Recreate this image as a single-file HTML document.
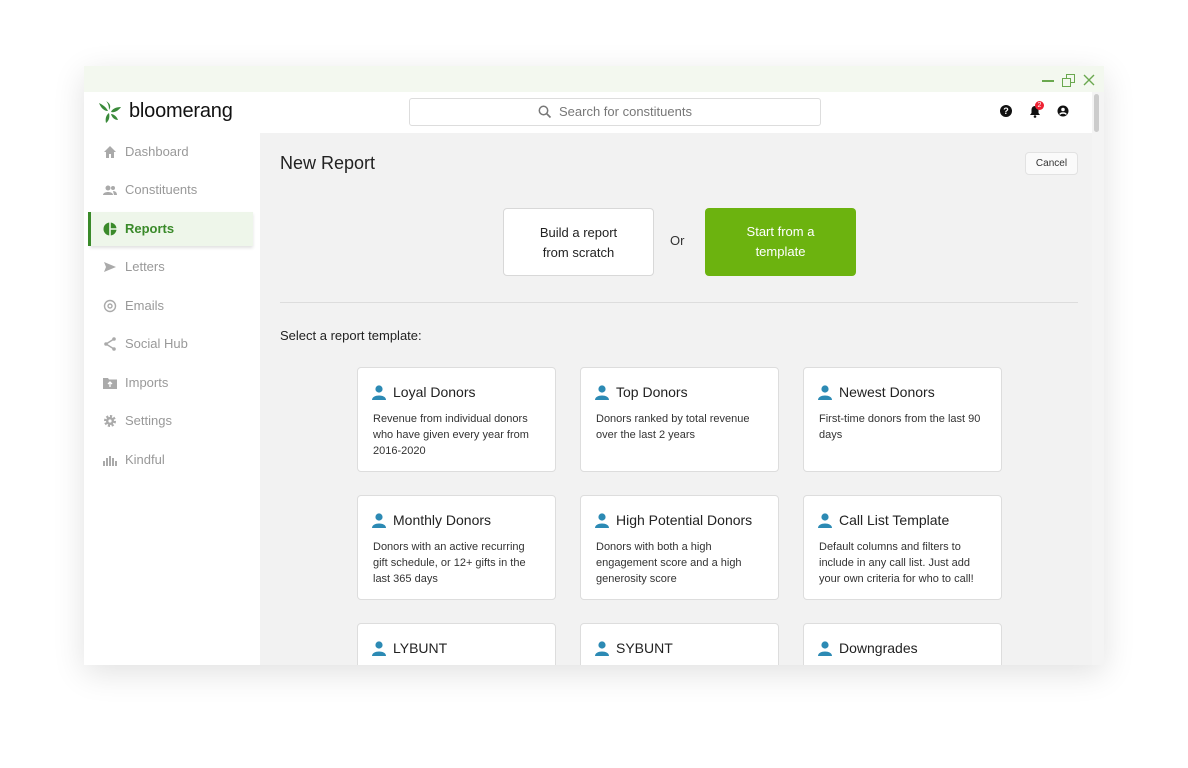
<!DOCTYPE html>
<html><head><meta charset="utf-8"><style>
*{box-sizing:border-box;margin:0;padding:0}
body{width:1188px;height:768px;background:#fff;font-family:"Liberation Sans",sans-serif;position:relative;overflow:hidden}
.a{position:absolute}
#win{left:84px;top:66px;width:1020px;height:599px;background:#fff;box-shadow:0 8px 30px rgba(0,0,0,.12);overflow:hidden}
.nav{left:41px;font-size:13px;color:#999;height:20px;line-height:20px}
.ni{left:19px;width:14px;height:14px}
.card{width:199px;height:105px;background:#fff;border:1px solid #ddd;border-radius:4px}
.card h4{position:absolute;left:35px;top:16px;font-size:14px;font-weight:normal;color:#222}
.card p{position:absolute;left:15px;top:43px;width:165px;font-size:11px;line-height:16px;color:#333}
.card svg{position:absolute;left:14px;top:17px}
</style></head><body>
<div id="win" class="a">
 <div class="a" style="left:0;top:0;width:1020px;height:26px;background:#f3f8ef"></div>
 <div class="a" style="left:958px;top:14px;width:12px;height:1.5px;background:#6aa84f"></div>
 <div class="a" style="left:982px;top:8px;width:9px;height:9px;border:1.5px solid #6aa84f"></div>
 <div class="a" style="left:978px;top:12px;width:9px;height:9px;border:1.5px solid #6aa84f;background:#f3f8ef"></div>
 <svg class="a" style="left:999px;top:8px" width="12" height="12"><path d="M1 1L11 11M11 1L1 11" stroke="#6aa84f" stroke-width="1.4"/></svg>
 <svg class="a" style="left:14px;top:34px" width="24" height="24" viewBox="0 0 24 24"><path d="M1 3C5 5 8 7 10 11C6 11 3 8 1 3Z" fill="#3a8a3a"/><path d="M8 1C10 3 11 6 11 10C13 7 13 4 8 1Z" fill="#3a8a3a"/><path d="M23 7C18 7 14 9 13 12C17 13 21 10 23 7Z" fill="#3a8a3a"/><path d="M11 13C8 15 7 19 8 23C11 21 12 17 11 13Z" fill="#3a8a3a"/><path d="M13 14C14 18 17 20 20 20C19 17 16 14 13 14Z" fill="#3a8a3a"/></svg>
 <div class="a" style="left:45px;top:34px;font-size:20px;color:#111;letter-spacing:-.2px">bloomerang</div>
 <div class="a" style="left:325px;top:32px;width:412px;height:28px;border:1px solid #ddd;border-radius:3px"></div>
 <svg class="a" style="left:454px;top:39px" width="14" height="14"><circle cx="5.5" cy="5.5" r="4.2" stroke="#777" stroke-width="1.5" fill="none"/><path d="M8.5 8.5L12.5 12.5" stroke="#777" stroke-width="1.6"/></svg>
 <div class="a" style="left:475px;top:38px;font-size:13px;color:#777">Search for constituents</div>
 <div class="a" style="left:916px;top:39px;width:12px;height:12px;border-radius:50%;background:#111;color:#fff;font-size:9px;font-weight:bold;text-align:center;line-height:12px">?</div>
 <svg class="a" style="left:945px;top:39px" width="12" height="13"><path d="M6 1C3.5 1 2.5 3 2.5 5V8L1 10H11L9.5 8V5C9.5 3 8.5 1 6 1Z" fill="#111"/><circle cx="6" cy="11.5" r="1.3" fill="#111"/></svg>
 <div class="a" style="left:951px;top:35px;width:9px;height:9px;border-radius:50%;background:#e23;color:#fff;font-size:7px;text-align:center;line-height:9px">2</div>
 <svg class="a" style="left:973px;top:39px" width="12" height="12"><circle cx="6" cy="6" r="5.5" fill="#111"/><circle cx="6" cy="4.5" r="1.8" fill="#fff"/><path d="M2.8 9.5C3.5 7.5 8.5 7.5 9.2 9.5" stroke="#fff" stroke-width="1.4" fill="none"/></svg>
 <div class="a" style="left:1008px;top:26px;width:12px;height:573px;background:#f4f4f4"></div>
 <div class="a" style="left:1010px;top:28px;width:5px;height:38px;background:#ccc;border-radius:3px"></div>
 <div class="a" style="left:6px;top:146px;width:163px;height:34px;background:#eef6ea;box-shadow:0 2px 3px rgba(0,0,0,.12)"></div>
 <div class="a" style="left:4px;top:146px;width:3px;height:34px;background:#3a8a2a"></div>
 <svg class="a ni" style="top:79px" viewBox="0 0 14 14"><path d="M7 1L1 7H3V13H6V9H8V13H11V7H13Z" fill="#aaa"/></svg>
 <div class="a nav" style="top:76px">Dashboard</div>
 <svg class="a ni" style="top:117px" viewBox="0 0 14 14"><circle cx="5" cy="5" r="2.5" fill="#aaa"/><circle cx="10" cy="5" r="2" fill="#aaa"/><path d="M0 12C0 8 10 8 10 12Z M10 8C13 8 14 10 14 12H11Z" fill="#aaa"/></svg>
 <div class="a nav" style="top:114px">Constituents</div>
 <svg class="a ni" style="top:156px" viewBox="0 0 14 14"><circle cx="7" cy="7" r="6.5" fill="#3a8a2a"/><path d="M7 0.5V13.5M7 7H13.5" stroke="#eef6ea" stroke-width="1.6"/></svg>
 <div class="a nav" style="top:153px;color:#3a8a2a;font-weight:bold">Reports</div>
 <svg class="a ni" style="top:194px" viewBox="0 0 14 14"><path d="M1 2L13 7L1 12L3 7Z" fill="#aaa"/></svg>
 <div class="a nav" style="top:191px">Letters</div>
 <svg class="a ni" style="top:233px" viewBox="0 0 14 14"><circle cx="7" cy="7" r="5.5" stroke="#aaa" stroke-width="1.4" fill="none"/><circle cx="7" cy="7" r="2" stroke="#aaa" stroke-width="1.4" fill="none"/></svg>
 <div class="a nav" style="top:230px">Emails</div>
 <svg class="a ni" style="top:271px" viewBox="0 0 14 14"><path d="M11 2L3 7L11 12" stroke="#aaa" stroke-width="1.4" fill="none"/><circle cx="11" cy="2" r="1.8" fill="#aaa"/><circle cx="3" cy="7" r="1.8" fill="#aaa"/><circle cx="11" cy="12" r="1.8" fill="#aaa"/></svg>
 <div class="a nav" style="top:268px">Social Hub</div>
 <svg class="a ni" style="top:310px" viewBox="0 0 14 14"><path d="M0 2H5L6 3.5H14V13H0Z" fill="#aaa"/><path d="M7 6V11M5 8L7 6L9 8" stroke="#fff" stroke-width="1.3" fill="none"/></svg>
 <div class="a nav" style="top:307px">Imports</div>
 <svg class="a ni" style="top:348px" viewBox="0 0 14 14"><circle cx="7" cy="7" r="4.5" stroke="#aaa" stroke-width="3" fill="none" stroke-dasharray="2 1.5"/><circle cx="7" cy="7" r="4" fill="#aaa"/><circle cx="7" cy="7" r="1.6" fill="#fff"/></svg>
 <div class="a nav" style="top:345px">Settings</div>
 <svg class="a ni" style="top:387px" viewBox="0 0 14 14"><path d="M1 8V13M4 5V13M7 3V13M10 5V13M13 8V13" stroke="#aaa" stroke-width="2"/></svg>
 <div class="a nav" style="top:384px">Kindful</div>
 <div class="a" style="left:176px;top:67px;width:832px;height:532px;background:#f2f2f2">
  <div class="a" style="left:20px;top:20px;font-size:18px;color:#222">New Report</div>
  <div class="a" style="left:765px;top:19px;width:53px;height:23px;background:#fafafa;border:1px solid #e2e2e2;border-radius:4px;font-size:10px;color:#333;text-align:center;line-height:21px">Cancel</div>
  <div class="a" style="left:243px;top:75px;width:151px;height:68px;background:#fff;border:1px solid #d8d8d8;border-radius:4px;font-size:13px;color:#222;text-align:center;padding-top:14px;line-height:20px">Build a report<br>from scratch</div>
  <div class="a" style="left:410px;top:100px;font-size:13px;color:#333">Or</div>
  <div class="a" style="left:445px;top:75px;width:151px;height:68px;background:#6cb30f;border-radius:4px;font-size:13px;color:#fff;text-align:center;padding-top:14px;line-height:20px">Start from a<br>template</div>
  <div class="a" style="left:20px;top:169px;width:798px;height:1px;background:#ddd"></div>
  <div class="a" style="left:20px;top:195px;font-size:13px;color:#222">Select a report template:</div>
  <div class="a card" style="left:97px;top:234px"><svg width="14" height="15"><circle cx="7" cy="4" r="3.6" fill="#2c8ab4"/><path d="M0 15C0 9 14 9 14 15Z" fill="#2c8ab4"/></svg><h4>Loyal Donors</h4><p>Revenue from individual donors who have given every year from 2016-2020</p></div>
  <div class="a card" style="left:320px;top:234px"><svg width="14" height="15"><circle cx="7" cy="4" r="3.6" fill="#2c8ab4"/><path d="M0 15C0 9 14 9 14 15Z" fill="#2c8ab4"/></svg><h4>Top Donors</h4><p>Donors ranked by total revenue over the last 2 years</p></div>
  <div class="a card" style="left:543px;top:234px"><svg width="14" height="15"><circle cx="7" cy="4" r="3.6" fill="#2c8ab4"/><path d="M0 15C0 9 14 9 14 15Z" fill="#2c8ab4"/></svg><h4>Newest Donors</h4><p>First-time donors from the last 90 days</p></div>
  <div class="a card" style="left:97px;top:362px"><svg width="14" height="15"><circle cx="7" cy="4" r="3.6" fill="#2c8ab4"/><path d="M0 15C0 9 14 9 14 15Z" fill="#2c8ab4"/></svg><h4>Monthly Donors</h4><p>Donors with an active recurring gift schedule, or 12+ gifts in the last 365 days</p></div>
  <div class="a card" style="left:320px;top:362px"><svg width="14" height="15"><circle cx="7" cy="4" r="3.6" fill="#2c8ab4"/><path d="M0 15C0 9 14 9 14 15Z" fill="#2c8ab4"/></svg><h4>High Potential Donors</h4><p>Donors with both a high engagement score and a high generosity score</p></div>
  <div class="a card" style="left:543px;top:362px"><svg width="14" height="15"><circle cx="7" cy="4" r="3.6" fill="#2c8ab4"/><path d="M0 15C0 9 14 9 14 15Z" fill="#2c8ab4"/></svg><h4>Call List Template</h4><p>Default columns and filters to include in any call list. Just add your own criteria for who to call!</p></div>
  <div class="a card" style="left:97px;top:490px"><svg width="14" height="15"><circle cx="7" cy="4" r="3.6" fill="#2c8ab4"/><path d="M0 15C0 9 14 9 14 15Z" fill="#2c8ab4"/></svg><h4>LYBUNT</h4></div>
  <div class="a card" style="left:320px;top:490px"><svg width="14" height="15"><circle cx="7" cy="4" r="3.6" fill="#2c8ab4"/><path d="M0 15C0 9 14 9 14 15Z" fill="#2c8ab4"/></svg><h4>SYBUNT</h4></div>
  <div class="a card" style="left:543px;top:490px"><svg width="14" height="15"><circle cx="7" cy="4" r="3.6" fill="#2c8ab4"/><path d="M0 15C0 9 14 9 14 15Z" fill="#2c8ab4"/></svg><h4>Downgrades</h4></div>
 </div>
</div>
</body></html>
